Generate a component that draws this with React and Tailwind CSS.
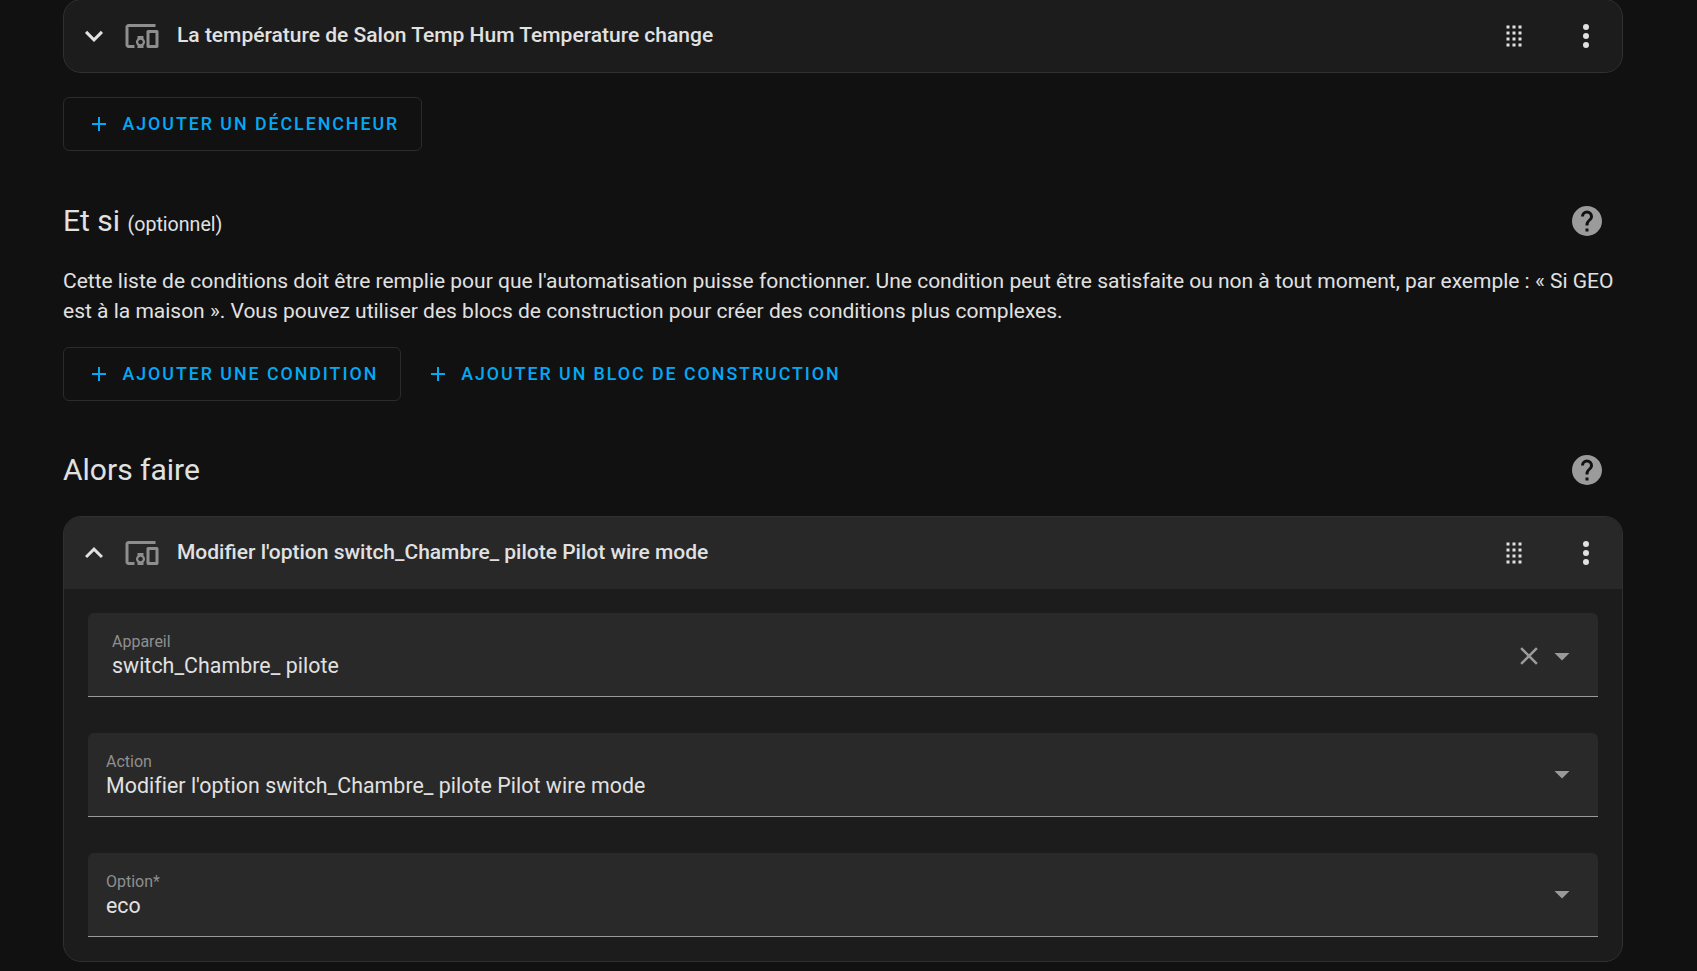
import {} from 'react'

const mdi = {
  down: 'M7.41,8.58L12,13.17L16.59,8.58L18,10L12,16L6,10L7.41,8.58Z',
  up: 'M7.41,15.41L12,10.83L16.59,15.41L18,14L12,8L6,14L7.41,15.41Z',
  devices:
    'M3 6H21V4H3C1.9 4 1 4.9 1 6V18C1 19.1 1.9 20 3 20H7V18H3V6M13 12H9V13.78C8.39 14.33 8 15.11 8 16C8 16.89 8.39 17.67 9 18.22V20H13V18.22C13.61 17.67 14 16.88 14 16S13.61 14.33 13 13.78V12M11 17.5C10.17 17.5 9.5 16.83 9.5 16S10.17 14.5 11 14.5 12.5 15.17 12.5 16 11.83 17.5 11 17.5M22 8H16C15.5 8 15 8.5 15 9V19C15 19.5 15.5 20 16 20H22C22.5 20 23 19.5 23 19V9C23 8.5 22.5 8 22 8M21 18H17V10H21V18Z',
  drag: 'M7,19V17H9V19H7M11,19V17H13V19H11M15,19V17H17V19H15M7,15V13H9V15H7M11,15V13H13V15H11M15,15V13H17V15H15M7,11V9H9V11H7M11,11V9H13V11H11M15,11V9H17V11H15M7,7V5H9V7H7M11,7V5H13V7H11M15,7V5H17V7H15Z',
  dots: 'M12,16A2,2 0 0,1 14,18A2,2 0 0,1 12,20A2,2 0 0,1 10,18A2,2 0 0,1 12,16M12,10A2,2 0 0,1 14,12A2,2 0 0,1 12,14A2,2 0 0,1 10,12A2,2 0 0,1 12,10M12,4A2,2 0 0,1 14,6A2,2 0 0,1 12,8A2,2 0 0,1 10,6A2,2 0 0,1 12,4Z',
  help: 'M15.07,11.25L14.17,12.17C13.45,12.89 13,13.5 13,15H11V14.5C11,13.39 11.45,12.39 12.17,11.67L13.41,10.41C13.78,10.05 14,9.55 14,9C14,7.89 13.1,7 12,7A2,2 0 0,0 10,9H8A4,4 0 0,1 12,5A4,4 0 0,1 16,9C16,9.88 15.64,10.67 15.07,11.25M13,19H11V17H13M12,2A10,10 0 0,0 2,12A10,10 0 0,0 12,22A10,10 0 0,0 22,12C22,6.47 17.5,2 12,2Z',
  plus: 'M19,13H13V19H11V13H5V11H11V5H13V11H19V13Z',
  close: 'M19,6.41L17.59,5L12,10.59L6.41,5L5,6.41L10.59,12L5,17.59L6.41,19L12,13.41L17.59,19L19,17.59L13.41,12L19,6.41Z',
  menuDown: 'M7,10L12,15L17,10H7Z',
}

function Icon({ d, className }) {
  return (
    <svg viewBox="0 0 24 24" className={className} fill="currentColor">
      <path d={d} />
    </svg>
  )
}

function CardHeader({ title, open }) {
  return (
    <div className={`flex h-[72px] items-center pl-[12px] pr-[18px] ${open ? 'bg-[#282828]' : ''}`}>
      <Icon d={open ? mdi.up : mdi.down} className="h-9 w-9 text-[#e1e1e1]" />
      <Icon d={mdi.devices} className="ml-[12px] h-9 w-9 text-[#8e8e8e]" />
      <div className="ml-[17px] flex-1 text-[21px] font-medium text-[#e1e1e1]">{title}</div>
      <Icon d={mdi.drag} className="h-9 w-9 text-[#e1e1e1]" />
      <Icon d={mdi.dots} className="ml-[36px] h-9 w-9 text-[#e1e1e1]" />
    </div>
  )
}

function AddButton({ label, outlined }) {
  return (
    <button
      className={`flex h-[54px] items-center rounded-[6px] pl-[24px] pr-[22px] text-[17.8px] font-medium tracking-[1.97px] text-[#03a9f4] ${
        outlined ? 'border border-[#2b2b2b]' : ''
      }`}
    >
      <Icon d={mdi.plus} className="mr-[5px] -ml-[1px] h-6 w-6" />
      <span className="ml-[6.5px]">{label}</span>
    </button>
  )
}

function Heading({ children }) {
  return (
    <div className="flex items-center justify-between pr-[18px]">
      <div className="pt-px text-[30px] leading-9 text-[#e1e1e1]">{children}</div>
      <Icon d={mdi.help} className="h-9 w-9 text-[#9b9b9b]" />
    </div>
  )
}

function Field({ label, value, clearable, inset }) {
  return (
    <div className="relative h-[84px] rounded-t-[6px] border-b border-[#9a9a9a] bg-[#292929]">
      <div className={`pt-[19px] ${inset ? 'pl-[24px]' : 'pl-[18px]'}`}>
        <div className="text-[16px] leading-5 text-[#8f8f8f]">{label}</div>
        <div className="text-[21.33px] leading-7 tracking-[0.05px] text-[#e1e1e1]">{value}</div>
      </div>
      <div className={`absolute right-[18px] flex items-center ${clearable ? 'top-[25px]' : 'top-[23px]'}`}>
        {clearable && <Icon d={mdi.close} className="h-[30px] w-[30px] text-[#9a9a9a]" />}
        <Icon d={mdi.menuDown} className="h-9 w-9 text-[#9a9a9a]" />
      </div>
    </div>
  )
}

export default function App() {
  return (
    <div className="h-[971px] overflow-hidden bg-[#111111] pl-[63px] pr-[74px] font-['Roboto',sans-serif]">
      <div className="-mt-px overflow-hidden rounded-[18px] border border-[#303030] bg-[#1c1c1c]">
        <CardHeader title="La température de Salon Temp Hum Temperature change" />
      </div>

      <div className="mt-[24px] flex">
        <AddButton label="AJOUTER UN DÉCLENCHEUR" outlined />
      </div>

      <div className="mt-[51px]">
        <Heading>
          Et si <span className="text-[19.6px] leading-none">(optionnel)</span>
        </Heading>
      </div>
      <p className="mt-[27px] text-[21px] leading-[30px] tracking-[-0.005px] text-[#e1e1e1]">
        Cette liste de conditions doit être remplie pour que l'automatisation puisse fonctionner. Une condition peut être
        satisfaite ou non à tout moment, par exemple : « Si GEO est à la maison ». Vous pouvez utiliser des blocs de
        construction pour créer des conditions plus complexes.
      </p>

      <div className="mt-[21px] flex gap-[1.5px]">
        <AddButton label="AJOUTER UNE CONDITION" outlined />
        <AddButton label="AJOUTER UN BLOC DE CONSTRUCTION" />
      </div>

      <div className="mt-[50px]">
        <Heading>Alors faire</Heading>
      </div>

      <div className="mt-[28px] overflow-hidden rounded-[18px] border border-[#303030] bg-[#1c1c1c]">
        <CardHeader title="Modifier l'option switch_Chambre_ pilote Pilot wire mode" open />
        <div className="flex flex-col gap-[36px] px-[24px] pb-[24px] pt-[24px]">
          <Field label="Appareil" value="switch_Chambre_ pilote" clearable inset />
          <Field label="Action" value="Modifier l'option switch_Chambre_ pilote Pilot wire mode" />
          <Field label="Option*" value="eco" />
        </div>
      </div>
    </div>
  )
}
